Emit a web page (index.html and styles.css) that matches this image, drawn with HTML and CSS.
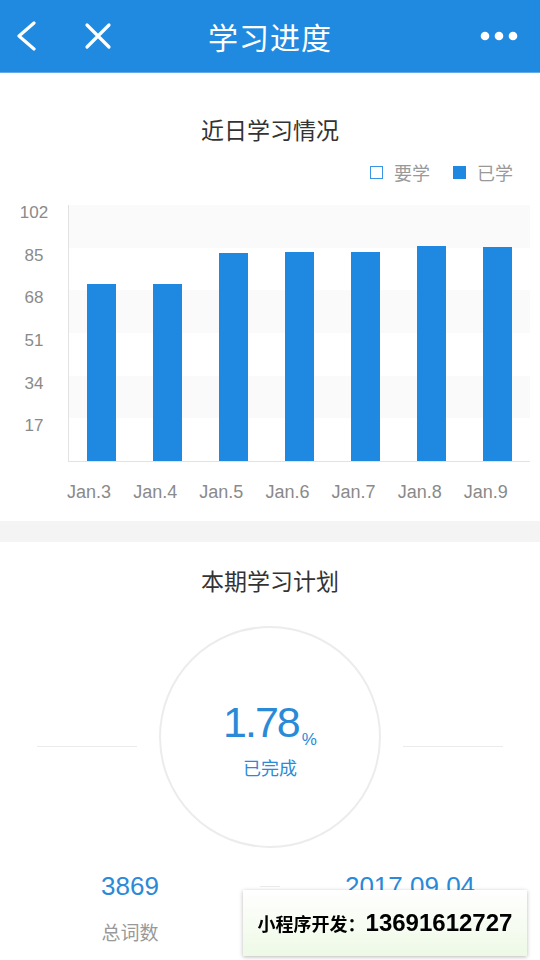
FILE: index.html
```html
<!DOCTYPE html>
<html lang="zh-CN">
<head>
  <meta charset="UTF-8">
  <meta name="viewport" content="width=device-width, initial-scale=1.0">
  <title>学习进度</title>
  <link rel="stylesheet" href="styles.css">
</head>
<body>
  <header class="topbar">
    <div class="topbar-left">
      <svg class="icon-back" width="24" height="30" viewBox="0 0 24 30">
        <polyline points="20,2 5,15 20,28" fill="none" stroke="#fff" stroke-width="3.2" stroke-linecap="round" stroke-linejoin="round"/>
      </svg>
      <svg class="icon-close" width="28" height="28" viewBox="0 0 28 28">
        <path d="M3 3 L25 25 M25 3 L3 25" stroke="#fff" stroke-width="3.2" stroke-linecap="round"/>
      </svg>
    </div>
    <h1 class="topbar-title">学习进度</h1>
    <div class="topbar-right">
      <svg width="40" height="10" viewBox="0 0 40 10">
        <circle cx="5" cy="5" r="4.3" fill="#fff"/>
        <circle cx="19" cy="5" r="4.3" fill="#fff"/>
        <circle cx="33" cy="5" r="4.3" fill="#fff"/>
      </svg>
    </div>
  </header>

  <section class="panel chart-panel">
    <h2 class="panel-title">近日学习情况</h2>
    <div class="legend">
      <span class="legend-item"><i class="swatch swatch-empty"></i>要学</span>
      <span class="legend-item"><i class="swatch swatch-full"></i>已学</span>
    </div>

    <div class="chart">
      <div class="y-axis">
        <span>102</span>
        <span>85</span>
        <span>68</span>
        <span>51</span>
        <span>34</span>
        <span>17</span>
      </div>
      <div class="plot">
        <div class="slot"><div class="bar" style="height: 69.1%"></div></div>
        <div class="slot"><div class="bar" style="height: 69.1%"></div></div>
        <div class="slot"><div class="bar" style="height: 81.2%"></div></div>
        <div class="slot"><div class="bar" style="height: 81.7%"></div></div>
        <div class="slot"><div class="bar" style="height: 81.6%"></div></div>
        <div class="slot"><div class="bar" style="height: 84.0%"></div></div>
        <div class="slot"><div class="bar" style="height: 83.7%"></div></div>
      </div>
    </div>
    <div class="x-axis">
      <span>Jan.3</span>
      <span>Jan.4</span>
      <span>Jan.5</span>
      <span>Jan.6</span>
      <span>Jan.7</span>
      <span>Jan.8</span>
      <span>Jan.9</span>
    </div>
  </section>

  <div class="spacer"></div>

  <section class="panel plan-panel">
    <h2 class="panel-title">本期学习计划</h2>
    <div class="progress-row">
      <span class="side-line"></span>
      <div class="ring">
        <div class="ring-value">1.78<small>%</small></div>
        <div class="ring-label">已完成</div>
      </div>
      <span class="side-line"></span>
    </div>

    <div class="stats">
      <div class="stat">
        <div class="stat-num">3869</div>
        <div class="stat-label">总词数</div>
      </div>
      <div class="stat-divider"></div>
      <div class="stat">
        <div class="stat-num">2017.09.04</div>
      </div>
    </div>
  </section>

  <div class="contact">小程序开发：<b>13691612727</b></div>
</body>
</html>
```

FILE: styles.css
```css
body {
  margin: 0;
  font-family: "Noto Sans", "Noto Sans CJK SC", sans-serif;
  background: #fff;
  color: #333;
}

/* top bar */
.topbar {
  height: 72px;
  background: #1f8ae0;
  border-bottom: 1px solid #62acec;
  display: grid;
  grid-template-columns: 1fr auto 1fr;
  align-items: center;
}
.topbar-left {
  display: flex;
  align-items: center;
  padding-left: 14px;
  gap: 46px;
}
.topbar-left svg {
  display: block;
}
.topbar-title {
  margin: 0;
  font-family: "Noto Sans CJK SC", sans-serif;
  font-size: 30px;
  font-weight: 400;
  color: #fff;
  letter-spacing: 1px;
}
.topbar-right {
  display: flex;
  justify-content: flex-end;
  padding-right: 20px;
}
.topbar-right svg {
  display: block;
}

/* panels */
.panel-title {
  margin: 0;
  text-align: center;
  font-family: "Noto Sans CJK SC", sans-serif;
  font-size: 23px;
  font-weight: 400;
  line-height: 30px;
  color: #333;
}
.chart-panel {
  padding: 41px 0 19px;
}
.legend {
  display: flex;
  justify-content: flex-end;
  gap: 23px;
  margin-top: 18px;
  padding-right: 27px;
  font-family: "Noto Sans CJK SC", sans-serif;
  font-size: 18px;
  line-height: 20px;
  color: #999;
}
.legend-item {
  display: flex;
  align-items: center;
  gap: 11px;
}
.swatch {
  display: block;
  width: 13px;
  height: 13px;
  box-sizing: border-box;
}
.swatch-empty {
  border: 1px solid #3a96e3;
}
.swatch-full {
  background: #1f88e0;
}

/* chart */
.chart {
  display: flex;
  margin-top: 23px;
  padding-right: 10px;
}
.y-axis {
  width: 68px;
  display: flex;
  flex-direction: column;
}
.y-axis span {
  height: 42.67px;
  line-height: 16px;
  font-family: "Liberation Sans", sans-serif;
  font-size: 17px;
  text-align: center;
  color: #8a8a8a;
}
.plot {
  flex: 1;
  height: 256px;
  display: flex;
  border-left: 1px solid #e2e2e2;
  border-bottom: 1px solid #e2e2e2;
  background: repeating-linear-gradient(#fafafa 0, #fafafa 42.67px, #fff 42.67px, #fff 85.33px);
}
.slot {
  flex: 1;
  display: flex;
  justify-content: center;
  align-items: flex-end;
}
.bar {
  width: 29px;
  background: #1f88e0;
}
.x-axis {
  display: flex;
  margin: 20px 10px 0 67px;
  font-family: "Liberation Sans", sans-serif;
  font-size: 18px;
  line-height: 20px;
  color: #8a8a8a;
}
.x-axis span {
  flex: 1;
}

.spacer {
  height: 21px;
  background: #f4f4f4;
}

/* plan */
.plan-panel {
  padding-top: 23px;
}
.progress-row {
  display: flex;
  justify-content: center;
  align-items: center;
  gap: 22px;
  margin-top: 31px;
}
.side-line {
  width: 100px;
  height: 1px;
  margin-top: 18px;
  background: #ebebeb;
}
.ring {
  width: 222px;
  height: 222px;
  box-sizing: border-box;
  border: 2px solid #ececec;
  border-radius: 50%;
  display: flex;
  flex-direction: column;
  align-items: center;
  justify-content: center;
  padding-top: 3px;
  color: #2a8ad8;
}
.ring-value {
  height: 46px;
  font-family: "Liberation Sans", sans-serif;
  font-size: 43px;
  line-height: 46px;
  letter-spacing: -2px;
}
.ring-value small {
  font-family: "Liberation Sans", sans-serif;
  font-size: 17px;
  line-height: 0;
  letter-spacing: 0;
  margin-left: 3px;
  vertical-align: -8px;
}
.ring-label {
  margin-top: 10px;
  font-family: "Noto Sans CJK SC", sans-serif;
  font-size: 18px;
  line-height: 24px;
}

.stats {
  display: grid;
  grid-template-columns: 1fr 20px 1fr;
  align-items: start;
  margin-top: 23px;
  padding-bottom: 10px;
}
.stat {
  text-align: center;
}
.stat-num {
  font-family: "Liberation Sans", sans-serif;
  font-size: 26px;
  line-height: 30px;
  color: #2a8ad8;
}
.stat-label {
  margin-top: 18px;
  font-family: "Noto Sans CJK SC", sans-serif;
  font-size: 19px;
  line-height: 26px;
  color: #999;
}
.stat-divider {
  height: 1px;
  margin-top: 15px;
  background: #ebebeb;
}

/* floating contact card */
.contact {
  position: fixed;
  left: 243px;
  top: 890px;
  width: 284px;
  height: 66px;
  display: flex;
  align-items: center;
  justify-content: center;
  background: linear-gradient(#ffffff, #eef9e6);
  box-shadow: 0 1px 4px rgba(0, 0, 0, 0.28);
  font-family: "Noto Sans CJK SC", sans-serif;
  font-size: 18px;
  font-weight: 700;
  color: #000;
}
.contact b {
  font-family: "Liberation Sans", sans-serif;
  font-size: 24px;
}
```
